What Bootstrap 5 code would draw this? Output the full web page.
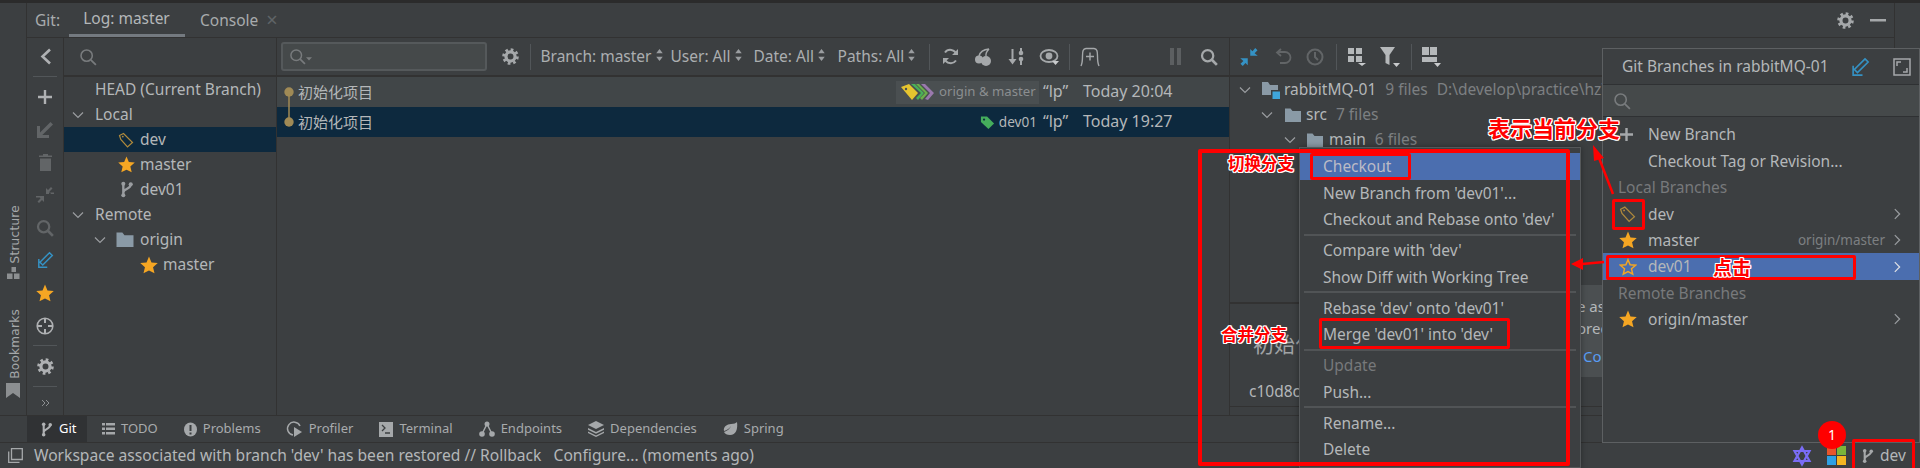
<!doctype html>
<html lang="en">
<head>
<meta charset="utf-8">
<title>Git log</title>
<link href="https://cdn.jsdelivr.net/npm/bootstrap@5.3.0/dist/css/bootstrap.min.css" rel="stylesheet">
<style>
html,body{height:468px;overflow:hidden;margin:0}
body{background:#3c3f41;color:#b4b7b9;font:15.5px/1.2 "Noto Sans","Noto Sans CJK SC",sans-serif;}
svg{display:block;flex:none;overflow:visible}
.ide{position:relative;width:1920px;height:468px;overflow:hidden}
.topstrip{height:3px;background:#2b2b2b}
.mainrow{height:412px}
.lstripe{width:27px;border-right:1px solid #323232;padding-bottom:17px}
.vlabel{writing-mode:vertical-rl;transform:rotate(180deg);font:12px "DejaVu Sans",sans-serif;letter-spacing:.3px;color:#a5a8aa;margin:0 0 4px 4px}
.vgap{height:29px}
.rstripe{width:26px;border-left:1px solid #323232}
.toolhead{height:35px;border-bottom:1px solid #323232;padding-left:8px}
.toolhead .hlabel{width:33.5px;color:#a8abad}
.logtab{width:116px;height:34px;line-height:31px;text-align:center;border-bottom:3px solid #747a80;margin-right:15.500px}
.contab{color:#a8abad}
.xclose{color:#5f6467;margin-left:8px;font-size:20px;line-height:1}
.gearend{margin-right:8px}
.ws-body{height:377px}
.actions{width:37px;border-right:1px solid #323232;padding-top:2px}
.aslot{width:36px;height:32.7px;flex:none}
.asep{width:24px;height:1px;background:#525659;margin:3px auto 4px 6px;flex:none}
.asep.tight{margin-bottom:0}
.col-tree{width:213px;border-right:1px solid #323232}
.bar{height:39px;border-bottom:2px solid #323232}
.treesearch{padding-left:15px}
.trow{height:25px;white-space:nowrap}
.trow.sel{background:#0d293e}
.p31{padding-left:31px}.p6{padding-left:6px}.p54{padding-left:54px}.p28{padding-left:28px}.p76{padding-left:76px}
.p7{padding-left:7px}.p29{padding-left:29px}.p52{padding-left:52px}
.cw25{width:25px}.cw24{width:24px}.cw26{width:26px}
.iw22{width:22px}.iw21{width:21px}.iw23{width:23px}.iw24{width:24px}
.col-log{width:953px;border-right:1px solid #323232}
.logsearch{width:206px;height:29px;margin-left:4px;background:#45494a;border:2px solid #55595b;border-radius:3px;padding:0 0 0 6px}
.tslot{width:33px}
.ms-g{margin-left:6.5px}
.pl-det{padding-left:2.5px}
.tsep{width:1px;height:26px;background:#525659;margin:0 3.5px}
.tsep2{margin:0 4px}
.flt{white-space:nowrap;color:#abaeb0}
.f1{width:130px;margin-left:6px}.f2{width:83px}.f3{width:84px}.f4{width:88px}
.updn{display:inline-block;vertical-align:1px;margin-left:4px}
.lrow{height:30px;padding-left:7px;white-space:nowrap}
.lrow.r1{background:#414648}
.lrow.r2{background:#0d293e}
.gnode{width:14px}
.msg{font-size:15px;margin-right:auto}
.chip{height:23px;background:#4a4f51;color:#8b8e90;padding:0 5px;margin-right:4px;width:143px;font-size:13.2px}
.tag2{margin-right:6px;font-size:13.6px}
.auth{width:40px;font-size:16px}
.dt{width:146px;font-size:16px}
.col-det{flex:1;min-width:0;position:relative}
.dname{white-space:nowrap}
.gr{color:#7c7f82;margin-left:9px}
.dtree{height:225px}
.ddiv{border-top:2px solid #323232}
.bigt{font-size:21px;padding:28px 0 0 23px;white-space:nowrap;color:#a0a3a5;height:78px}
.hsh{padding:0 0 0 19px;font-size:15.5px;height:24px}
.dline{border-top:1px solid #323232;height:9px}
.balloon{position:absolute;left:350px;top:247px;width:40px;height:92px;background:#4b4f51;overflow:hidden;font-size:15px;line-height:22px;padding-top:10px;white-space:nowrap}
.balloon b{display:block;font-weight:400;margin-left:-3px}
.balloon .lnk{color:#589df6;margin:6px 0 0 3px}
.tools{height:27px;border-top:1px solid #323232;font-size:13px;color:#a8abad}
.tgit{width:60px;height:27px;background:#303234;margin-left:27px;padding-left:12px;color:#fff;margin-right:15px}
.tgit span{margin-left:5px}
.titem{white-space:nowrap;margin-right:26px}
.titem span{margin-left:6px}
.status{height:26px;border-top:1px solid #323232;padding-left:8px;white-space:nowrap;font-size:15.6px}
.status span{margin-left:11px}
.sright{position:absolute;right:0;bottom:0;height:25px;width:128px}
.winlogo{margin-left:15px}
.gitmark{margin-left:14px}
.devbr{margin-left:5px}

.ctx.dropdown-menu{--bs-dropdown-bg:#3c3f41;--bs-dropdown-color:#b4b7b9;--bs-dropdown-border-color:#55585a;--bs-dropdown-border-radius:0;--bs-dropdown-padding-y:5px;--bs-dropdown-padding-x:0;--bs-dropdown-font-size:15.5px;--bs-dropdown-link-color:#b4b7b9;--bs-dropdown-divider-bg:#515456;--bs-dropdown-divider-margin-y:1.25px;--bs-dropdown-item-padding-y:0;--bs-dropdown-item-padding-x:23px;position:absolute;left:1299px;top:147px;width:282px;height:321px;min-width:0;z-index:10;margin:0;box-shadow:0 0 6px rgba(0,0,0,.35)}
.ctx .dropdown-item{height:26.5px;line-height:26.5px;padding-top:0;padding-bottom:0}
.ctx .dropdown-item.hot{background:#4b6eaf;color:#bbbbc6}
.ctx .dropdown-item.off{color:#77797b}
.ctx .dropdown-divider{margin-left:4px;margin-right:4px;border-top-width:2px;opacity:1}

.branches{position:absolute;left:1602px;top:48px;width:318px;height:395px;background:#3c3f41;border:1px solid #5d6062;z-index:10}
.bhead{height:35px;padding-left:19px}
.bsearch{height:33px;background:#45494a;border-top:1px solid #2f3133;border-bottom:1px solid #2f3133;padding-left:10px;margin-bottom:4.5px}
.bhead .ms-auto{margin-right:7px}
.bhead svg+svg{margin-left:16px}
.brow{height:26.4px;padding-left:16px;white-space:nowrap}
.brow.hot{background:#4b6eaf}
.brow .bi{width:29px}
.brow.txt{padding-left:45px}
.brow.cap{padding-left:15px;color:#77797b}
.bright{margin-left:auto;color:#7c7f82;font-size:13.5px}
.bchev{margin-left:auto;margin-right:15px}
.bright+.bchev{margin-left:5px}

.rbox{position:absolute;border:3px solid #f00;border-radius:2px;z-index:20}
.b-big{left:1198px;top:149px;width:372px;height:317px;border-width:4px}
.b-check{left:1310px;top:153px;width:101px;height:27px}
.b-merge{left:1319px;top:318px;width:191px;height:31px}
.b-tag{left:1612px;top:199px;width:33px;height:31px}
.b-dev01{left:1606px;top:255px;width:250px;height:25px}
.b-dev{left:1852px;top:439px;width:63px;height:32px}
.anno{position:absolute;z-index:21;color:#f00;font-family:"Noto Sans CJK SC",sans-serif;font-weight:700;white-space:nowrap;line-height:1;text-shadow:1px 0 #fff,-1px 0 #fff,0 1px #fff,0 -1px #fff,1px 1px #fff,-1px -1px #fff,1px -1px #fff,-1px 1px #fff}
.a1{left:1488px;top:116px;font-size:22px}
.a2{left:1228px;top:155px;font-size:16.5px}
.a3{left:1221px;top:326px;font-size:16.5px}
.a4{left:1713px;top:257px;font-size:19px}
.dot{position:absolute;left:1818px;top:421px;width:28px;height:28px;border-radius:50%;background:#f00;color:#fff;font-size:14px;text-align:center;line-height:28px;z-index:21}
.arrows{position:absolute;left:0;top:0;z-index:21}
</style>
</head>
<body>
<svg width="0" height="0" class="position-absolute">
<defs>
<symbol id="s" viewBox="0 0 16 16"><circle cx="6.8" cy="6.8" r="5" fill="none" stroke="currentColor" stroke-width="1.4"/><path d="M10.5 10.5L15 15" stroke="currentColor" stroke-width="1.6"/></symbol>
<symbol id="sb" viewBox="0 0 16 16"><circle cx="6.8" cy="6.8" r="5" fill="none" stroke="currentColor" stroke-width="2"/><path d="M10.5 10.5L15 15" stroke="currentColor" stroke-width="2.4"/></symbol>
<symbol id="cd" viewBox="0 0 16 16"><path d="M3 5.5l5 5 5-5" fill="none" stroke="currentColor" stroke-width="1.2"/></symbol>
<symbol id="cr" viewBox="0 0 16 16"><path d="M5.5 2.5l5.5 5.5-5.5 5.5" fill="none" stroke="currentColor" stroke-width="1.4"/></symbol>
<symbol id="star" viewBox="0 0 16 16"><path fill="currentColor" d="M8 .5l2.2 5.2 5.6.5-4.2 3.7 1.3 5.5L8 12.9l-4.9 2.5 1.3-5.5L.2 6.2l5.6-.5z"/></symbol>
<symbol id="staro" viewBox="0 0 16 16"><path fill="none" stroke="currentColor" stroke-width="1.3" d="M8 1.5l1.9 4.5 4.9.4-3.7 3.2 1.1 4.8L8 12.1l-4.2 2.3 1.1-4.8L1.2 6.4l4.9-.4z"/></symbol>
<symbol id="tago" viewBox="0 0 16 16"><path fill="none" stroke="currentColor" stroke-width="1.2" d="M1.5 3.5L5.5 1.5 14.5 10.5 9.5 15 2.8 7.5z"/><circle cx="4.8" cy="4.6" r=".9" fill="currentColor"/></symbol>
<symbol id="tagf" viewBox="0 0 16 16"><path fill="currentColor" d="M1 1.5h6.5l7.5 7.5-6 6L1 7.500z"/><circle cx="4.300" cy="4.800" r="1.200" fill="#0d293e"/></symbol>
<symbol id="br" viewBox="0 0 16 16"><path fill="none" stroke="currentColor" stroke-width="2.2" d="M5 2v12M12 3c0 5-7 4-7 8"/><circle cx="5" cy="2.500" r="1.900" fill="currentColor"/><circle cx="5" cy="13.500" r="1.900" fill="currentColor"/><circle cx="12" cy="3" r="1.900" fill="currentColor"/></symbol>
<symbol id="fo" viewBox="0 0 16 16"><path fill="#8a9aa6" d="M0 1.500h5.500l2 2.500H16v11H0z"/></symbol>
<symbol id="mo" viewBox="0 0 18 18"><path fill="#8a9aa6" d="M0 1h6l2 3h8v10H0z"/><path fill="#3c3f41" d="M9 9h9v9H9z"/><path fill="#3fa6dc" d="M10.500 10.500H18V18h-7.500z"/></symbol>
<symbol id="gear" viewBox="0 0 16 16"><circle cx="8" cy="8" r="4.300" fill="none" stroke="currentColor" stroke-width="3"/><circle cx="8" cy="8" r="6.500" fill="none" stroke="currentColor" stroke-width="2.600" stroke-dasharray="2.500 2.600"/></symbol>
<symbol id="tri" viewBox="0 0 8 5"><path fill="currentColor" d="M0 0h8L4 4.500z"/></symbol>
<symbol id="ud" viewBox="0 0 8 14"><path fill="currentColor" d="M4 0l3.800 5H.2zM4 14L.2 9h7.600z"/></symbol>
<symbol id="upd" viewBox="0 0 16 16"><path fill="none" stroke="currentColor" stroke-width="1.300" d="M12 1.500l2.500 2.500L6 12.500 3.500 10zM2.500 7v7.500H10"/></symbol>
<symbol id="coll" viewBox="0 0 16 16"><path fill="currentColor" d="M9 7V1.500l1.800 1.800L13 .800l1.800 1.800-2.300 2.300L15 7zM7 9v5.500l-1.800-1.800L3 15.200l-1.800-1.800 2.300-2.300L1 9z"/></symbol>
</defs>
</svg>

<div class="ide d-flex flex-column">
  <div class="topstrip"></div>
  <div class="mainrow d-flex">
    <div class="lstripe d-flex flex-column align-items-center justify-content-end">
      <div class="vlabel">Structure</div>
      <svg width="13" height="13" viewBox="0 0 13 13" fill="#8c8f91"><path d="M4.500 0h4.500v5H4.500zM0 6.500h5.500V12H0zM7 6.500h5.500V12H7z"/></svg>
      <div class="vgap"></div>
      <div class="vlabel">Bookmarks</div>
      <svg width="14" height="15" viewBox="0 0 14 15" fill="#8c8f91"><path d="M0 0h14v15l-7-5-7 5z"/></svg>
    </div>
    <div class="flex-grow-1 d-flex flex-column min-w-0">
      <div class="toolhead d-flex align-items-center">
        <div class="hlabel">Git:</div>
        <div class="logtab">Log: master</div>
        <div class="contab">Console</div><div class="xclose">×</div>
        <svg class="ms-auto" width="17" height="17" color="#a5a8aa"><use href="#gear"/></svg>
        <svg class="gearend ms-3" width="16" height="3" viewBox="0 0 16 3"><path fill="#a5a8aa" d="M0 0h16v2.500H0z"/></svg>
      </div>
      <div class="ws-body d-flex">
        <div class="actions d-flex flex-column">
          <div class="aslot d-flex align-items-center justify-content-center"><svg width="13" height="17" viewBox="0 0 13 17"><path d="M11 1.500L3.500 8.500 11 15.500" fill="none" stroke="#afb1b3" stroke-width="2.600"/></svg></div>
          <div class="asep"></div>
          <div class="aslot d-flex align-items-center justify-content-center"><svg width="14" height="14" viewBox="0 0 14 14"><path fill="#afb1b3" d="M5.800 0h2.400v5.800H14v2.400H8.200V14H5.800V8.200H0V5.800h5.800z"/></svg></div>
          <div class="aslot d-flex align-items-center justify-content-center"><svg width="16" height="16" viewBox="0 0 16 16"><path fill="#626567" d="M0 4v12h12v-3H5.300L16 2.500 13.500 0 3 10.500V4z"/></svg></div>
          <div class="aslot d-flex align-items-center justify-content-center"><svg width="13" height="17" viewBox="0 0 13 17"><path fill="#626567" d="M4 0h5v1.500h4V3H0V1.500h4zM1 4.500h11V17H1z"/></svg></div>
          <div class="aslot d-flex align-items-center justify-content-center"><svg width="18" height="18" viewBox="0 0 18 18"><path fill="#626567" d="M10 8V2l2 2 3-3 1.500 1.500-3 3L15 8zM8 10v6l-2-2-3 3-1.500-1.500 3-3L3 10zM0 10h5v1.500H0zM13 8h5V6.500h-5z"/></svg></div>
          <div class="aslot d-flex align-items-center justify-content-center"><svg width="18" height="18" color="#626567"><use href="#sb"/></svg></div>
          <div class="aslot d-flex align-items-center justify-content-center"><svg width="18" height="18" color="#3592c4"><use href="#upd"/></svg></div>
          <div class="aslot d-flex align-items-center justify-content-center"><svg width="18" height="18" color="#f5a623"><use href="#star"/></svg></div>
          <div class="aslot d-flex align-items-center justify-content-center"><svg width="18" height="18" viewBox="0 0 18 18" fill="none" stroke="#afb1b3"><circle cx="9" cy="9" r="7.800" stroke-width="1.600"/><path stroke-width="2" d="M9 1v5M9 12v5M1 9h5M12 9h5"/></svg></div>
          <div class="asep"></div>
          <div class="aslot d-flex align-items-center justify-content-center"><svg width="17" height="17" color="#afb1b3"><use href="#gear"/></svg></div>
          <div class="asep tight"></div>
          <div class="aslot d-flex align-items-center justify-content-center" ><svg width="9" height="8" viewBox="0 0 9 8" fill="none" stroke="#8c8f91"><path d="M1 1l3 3-3 3M5 1l3 3-3 3"/></svg></div>
        </div>
        <div class="col-tree">
          <div class="bar treesearch d-flex align-items-center"><svg width="18" height="18" color="#787b7d"><use href="#s"/></svg></div>
          <div class="trow d-flex align-items-center p31">HEAD (Current Branch)</div>
          <div class="trow d-flex align-items-center p6"><div class="cw25"><svg width="16" height="16" color="#9a9da0"><use href="#cd"/></svg></div>Local</div>
          <div class="trow sel d-flex align-items-center p54"><div class="iw22"><svg width="16" height="18" color="#b08a3c"><use href="#tago"/></svg></div>dev</div>
          <div class="trow d-flex align-items-center p54"><div class="iw22"><svg width="17" height="17" color="#f5a623"><use href="#star"/></svg></div>master</div>
          <div class="trow d-flex align-items-center p54"><div class="iw22"><svg width="17" height="17" color="#9a9da0"><use href="#br"/></svg></div>dev01</div>
          <div class="trow d-flex align-items-center p6"><div class="cw25"><svg width="16" height="16" color="#9a9da0"><use href="#cd"/></svg></div>Remote</div>
          <div class="trow d-flex align-items-center p28"><div class="cw24"><svg width="16" height="16" color="#9a9da0"><use href="#cd"/></svg></div><div class="iw24"><svg width="18" height="17"><use href="#fo"/></svg></div>origin</div>
          <div class="trow d-flex align-items-center p76"><div class="iw23"><svg width="18" height="18" color="#f5a623"><use href="#star"/></svg></div>master</div>
        </div>
        <div class="col-log">
          <div class="bar d-flex align-items-center">
            <div class="logsearch d-flex align-items-center"><svg width="17" height="17" color="#787b7d"><use href="#s"/></svg><svg class="mt-1" width="6" height="4" color="#787b7d"><use href="#tri"/></svg></div>
            <div class="tslot ms-g d-flex justify-content-center"><svg width="17" height="17" color="#a5a8aa"><use href="#gear"/></svg></div>
            <div class="tsep"></div>
            <div class="flt f1">Branch: master<svg class="updn" width="7" height="12" color="#9a9da0"><use href="#ud"/></svg></div>
            <div class="flt f2">User: All<svg class="updn" width="7" height="12" color="#9a9da0"><use href="#ud"/></svg></div>
            <div class="flt f3">Date: All<svg class="updn" width="7" height="12" color="#9a9da0"><use href="#ud"/></svg></div>
            <div class="flt f4">Paths: All<svg class="updn" width="7" height="12" color="#9a9da0"><use href="#ud"/></svg></div>
            <div class="tsep"></div>
            <div class="tslot d-flex justify-content-center"><svg width="17" height="17" viewBox="0 0 17 17" fill="none" stroke="#a5a8aa" stroke-width="2"><path d="M14.500 6.500A6.500 6.500 0 0 0 3 4.500M2.500 10.500A6.500 6.500 0 0 0 14 12.500"/><path fill="#a5a8aa" stroke="none" d="M16 1v6h-6zM1 16v-6h6z"/></svg></div>
            <div class="tslot d-flex justify-content-center"><svg width="17" height="18" viewBox="0 0 17 18"><circle cx="11" cy="13" r="5" fill="#a5a8aa"/><circle cx="4" cy="11.500" r="4" fill="#a5a8aa"/><path d="M4 8C5 4 8 1.500 14 1M11 8C10.500 5 12 3 14 1" fill="none" stroke="#a5a8aa" stroke-width="1.400"/></svg></div>
            <div class="tslot d-flex justify-content-center"><svg width="17" height="17" viewBox="0 0 17 17" fill="#a5a8aa"><path d="M3.500 1h2v10h3l-4 5.500-4-5.500h3z"/><path d="M12 0h2v3h-2zM12 13h2v4h-2z"/><circle cx="13" cy="5" r="2.300"/><circle cx="13" cy="11" r="2.300"/></svg></div>
            <div class="tslot d-flex justify-content-center position-relative"><svg width="20" height="16" viewBox="0 0 20 16"><ellipse cx="10" cy="7" rx="8.500" ry="6" fill="none" stroke="#a5a8aa" stroke-width="1.800"/><circle cx="10" cy="7" r="3.400" fill="#a5a8aa"/><path d="M13 12h7l-3.500 4z" fill="#c8cacc"/></svg></div>
            <div class="tsep"></div>
            <div class="tslot d-flex justify-content-center"><svg width="20" height="20" viewBox="0 0 20 20" fill="none" stroke="#a5a8aa" stroke-width="1.400"><path d="M1 19c1.500-3 1.500-6 1.500-10C2.500 4 3 2 6 1.500h8c3 .5 3.500 2.500 3.500 7.500 0 4 0 7 1.500 10M10 5.500v8M6 9.500h8"/></svg></div>
            <div class="ms-auto tslot d-flex justify-content-center"><svg width="11" height="17" viewBox="0 0 11 17" fill="#5c5f61"><path d="M0 0h4v17H0zM7 0h4v17H7z"/></svg></div>
            <div class="tslot d-flex justify-content-center me-1"><svg width="18" height="18" color="#a5a8aa"><use href="#sb"/></svg></div>
          </div>
          <div>
            <div class="lrow r1 d-flex align-items-center">
              <div class="gnode"><svg width="10" height="10" viewBox="0 0 10 10"><path d="M5 5v30" stroke="#a08a55" stroke-width="1.500"/><circle cx="5" cy="5" r="4.700" fill="#a08a55"/></svg></div>
              <div class="msg">初始化项目</div>
              <div class="chip d-flex align-items-center"><svg width="34" height="18" viewBox="0 0 34 18" class="me-1"><path fill="#e6c42f" d="M0 4l8-3 9 9-6 7z"/><circle cx="5" cy="6" r="1.200" fill="#4a4f51"/><path fill="#49b058" d="M10 1l4 0 9 9-6 7-2-2 5-5z"/><path fill="#6bb04a" d="M15 1l3 0 9 9-6 7-2-2 5-5z"/><path fill="#9a79ad" d="M20 1l4 0 9 9-6 7-3-1 5-6z"/></svg>origin &amp; master</div>
              <div class="auth">“lp”</div>
              <div class="dt">Today 20:04</div>
            </div>
            <div class="lrow r2 d-flex align-items-center">
              <div class="gnode"><svg width="10" height="10" viewBox="0 0 10 10"><circle cx="5" cy="5" r="4.700" fill="#a08a55"/></svg></div>
              <div class="msg">初始化项目</div>
              <svg class="me-1" width="15" height="17" color="#45ad5c"><use href="#tagf"/></svg>
              <div class="tag2">dev01</div>
              <div class="auth">“lp”</div>
              <div class="dt">Today 19:27</div>
            </div>
          </div>
        </div>
        <div class="col-det">
          <div class="bar d-flex align-items-center pl-det">
            <div class="tslot d-flex justify-content-center"><svg width="20" height="20" viewBox="0 0 16 16" color="#3592c4"><use href="#coll"/></svg></div>
            <div class="tslot d-flex justify-content-center"><svg width="17" height="17" viewBox="0 0 17 17" fill="none" stroke="#626567" stroke-width="1.800"><path d="M4 4h7a5 5 0 0 1 0 11H6M7 1L3 4.500 7 8"/></svg></div>
            <div class="tslot d-flex justify-content-center"><svg width="18" height="18" viewBox="0 0 18 18" fill="none" stroke="#626567" stroke-width="2"><circle cx="9" cy="9" r="7.500"/><path d="M9 4v5l3 3"/></svg></div>
            <div class="tsep tsep2"></div>
            <div class="tslot d-flex justify-content-center"><svg width="18" height="18" viewBox="0 0 18 18" fill="#b5b8ba"><path d="M0 0h6v6H0zM8 0h6v6H8zM0 8h6v6H0zM8 8h6v6H8z"/><path d="M10 15h8l-4 3z" fill="#c8cacc"/></svg></div>
            <div class="tslot d-flex justify-content-center"><svg width="20" height="20" viewBox="0 0 20 20" fill="#b5b8ba"><path d="M0 0h15L9.500 8v10l-4-2V8z"/><path d="M13 16h7l-3.500 4z" fill="#c8cacc"/></svg></div>
            <div class="tsep tsep2"></div>
            <div class="tslot d-flex justify-content-center"><svg width="20" height="20" viewBox="0 0 20 20" fill="#b5b8ba"><path d="M0 0h7v8H0zM8 0h7v8H8zM0 10h15v5H0z"/><path d="M12 16h7l-3.500 4z" fill="#c8cacc"/></svg></div>
          </div>
          <div class="dtree">
            <div class="trow d-flex align-items-center p7"><div class="cw25"><svg width="16" height="16" color="#9a9da0"><use href="#cd"/></svg></div><div class="iw22"><svg width="18" height="18"><use href="#mo"/></svg></div><span class="dname">rabbitMQ-01</span><span class="gr">9 files</span><span class="gr">D:\develop\practice\hz\rabbitMQ-01</span></div>
            <div class="trow d-flex align-items-center p29"><div class="cw26"><svg width="16" height="16" color="#9a9da0"><use href="#cd"/></svg></div><div class="iw21"><svg width="16" height="16"><use href="#fo"/></svg></div>src<span class="gr">7 files</span></div>
            <div class="trow d-flex align-items-center p52"><div class="cw24"><svg width="16" height="16" color="#9a9da0"><use href="#cd"/></svg></div><div class="iw23"><svg width="18" height="16"><use href="#fo"/></svg></div>main<span class="gr">6 files</span></div>
          </div>
          <div class="ddiv">
            <div class="bigt">初始化项目</div>
            <div class="hsh">c10d8c1</div>
            <div class="dline"></div>
          </div>
          <div class="balloon"><b>e as</b><b>ored</b><b class="lnk">Co</b></div>
        </div>
      </div>
    </div>
    <div class="rstripe"></div>
  </div>
  <div class="tools d-flex align-items-center">
    <div class="tgit d-flex align-items-center"><svg width="15" height="17" color="#afb1b3"><use href="#br"/></svg><span>Git</span></div>
    <div class="titem d-flex align-items-center"><svg width="13" height="13" viewBox="0 0 13 13" fill="#a5a8aa"><path d="M0 0h3v2.500H0zM4 0h9v2.500H4zM0 4.500h3V7H0zM4 4.500h9V7H4zM0 9h3v2.500H0zM4 9h9v2.500H4z"/></svg><span>TODO</span></div>
    <div class="titem d-flex align-items-center"><svg width="13" height="15" viewBox="0 0 13 15"><ellipse cx="6.500" cy="7.500" rx="6.500" ry="7" fill="#a5a8aa"/><path d="M5.500 3h2v6h-2zM5.500 10.500h2v2h-2z" fill="#3c3f41"/></svg><span>Problems</span></div>
    <div class="titem d-flex align-items-center"><svg width="16" height="16" viewBox="0 0 16 16" fill="none" stroke="#a5a8aa" stroke-width="1.500"><path d="M13 5A6.500 6.500 0 1 0 6 14"/><path fill="#a5a8aa" stroke="none" d="M7 6l8 5-8 5z"/></svg><span>Profiler</span></div>
    <div class="titem d-flex align-items-center"><svg width="14" height="15" viewBox="0 0 14 15"><path fill="#a5a8aa" d="M0 0h14v15H0z"/><path d="M3 3l3 3-3 3M6 11h5" fill="none" stroke="#3c3f41" stroke-width="1.300"/></svg><span>Terminal</span></div>
    <div class="titem d-flex align-items-center"><svg width="16" height="16" viewBox="0 0 16 16" fill="#a5a8aa"><circle cx="8" cy="3" r="2.500"/><circle cx="3" cy="13" r="2.800"/><circle cx="13" cy="13" r="2.800"/><path d="M8 3l-5 10M8 3l5 10" stroke="#a5a8aa" stroke-width="1.500"/></svg><span>Endpoints</span></div>
    <div class="titem d-flex align-items-center"><svg width="16" height="16" viewBox="0 0 16 16" fill="#a5a8aa"><path d="M8 0l8 4-8 4-8-4z"/><path d="M0 7l8 4 8-4v1.800l-8 4-8-4zM0 10.500l8 4 8-4v1.500l-8 4-8-4z"/></svg><span>Dependencies</span></div>
    <div class="titem d-flex align-items-center"><svg width="15" height="15" viewBox="0 0 15 15" fill="#a5a8aa"><path d="M14 0c1 7-1 13-7 13-3 0-5-1-6-3 3-1 6-3 7-6-2 3-4 4-7 5C0 5 4 2 8 2c3 0 5-1 6-2z"/></svg><span>Spring</span></div>
  </div>
  <div class="status d-flex align-items-center">
    <svg width="15" height="15" viewBox="0 0 15 15" fill="none" stroke="#a5a8aa" stroke-width="1.300"><path d="M3.500.700h10.800v10.800H3.500zM.7 3.500v10.800h10.800"/></svg>
    <span>Workspace associated with branch 'dev' has been restored // Rollback&nbsp;&nbsp; Configure... (moments ago)</span>
  </div>

  <div class="sright d-flex align-items-center">
    <svg width="20" height="20" viewBox="0 0 20 20" fill="none" stroke="#7a6cf5" stroke-width="2.200"><path d="M10 1.500L17.500 15h-15z"/><path d="M10 18.500L2.500 5h15z"/></svg>
    <svg class="winlogo" width="19" height="19" viewBox="0 0 19 19"><path fill="#e8552b" d="M0 0h9v9H0z"/><path fill="#7bb43a" d="M10 0h9v9h-9z"/><path fill="#2ea0e3" d="M0 10h9v9H0z"/><path fill="#f4b622" d="M10 10h9v9h-9z"/></svg>
    <svg class="gitmark" width="15" height="18" color="#a5a8aa"><use href="#br"/></svg>
    <span class="devbr">dev</span>
  </div>

  <div class="ctx dropdown-menu show">
    <a class="dropdown-item hot" href="#">Checkout</a>
    <a class="dropdown-item" href="#">New Branch from 'dev01'...</a>
    <a class="dropdown-item" href="#">Checkout and Rebase onto 'dev'</a>
    <hr class="dropdown-divider">
    <a class="dropdown-item" href="#">Compare with 'dev'</a>
    <a class="dropdown-item" href="#">Show Diff with Working Tree</a>
    <hr class="dropdown-divider">
    <a class="dropdown-item" href="#">Rebase 'dev' onto 'dev01'</a>
    <a class="dropdown-item" href="#">Merge 'dev01' into 'dev'</a>
    <hr class="dropdown-divider">
    <a class="dropdown-item off" href="#">Update</a>
    <a class="dropdown-item" href="#">Push...</a>
    <hr class="dropdown-divider">
    <a class="dropdown-item" href="#">Rename...</a>
    <a class="dropdown-item" href="#">Delete</a>
  </div>

  <div class="branches">
    <div class="bhead d-flex align-items-center">Git Branches in rabbitMQ-01
      <svg class="ms-auto" width="20" height="20" color="#3592c4"><use href="#upd"/></svg>
      <svg width="18" height="18" viewBox="0 0 18 18" fill="none" stroke="#a5a8aa" stroke-width="1.500" class="me-2"><path d="M1 1h16v16H1z"/><path d="M4 8V4h4M14 10v4h-4"/></svg>
    </div>
    <div class="bsearch d-flex align-items-center"><svg width="18" height="18" color="#787b7d"><use href="#s"/></svg></div>
    <div class="brow d-flex align-items-center"><div class="bi"><svg width="15" height="15" viewBox="0 0 15 15"><path fill="#a5a8aa" d="M6.300 1h2.400v5.300H14v2.400H8.700V14H6.300V8.700H1V6.300h5.300z"/></svg></div>New Branch</div>
    <div class="brow txt d-flex align-items-center">Checkout Tag or Revision...</div>
    <div class="brow cap d-flex align-items-center">Local Branches</div>
    <div class="brow d-flex align-items-center"><div class="bi"><svg width="17" height="18" color="#b08a3c"><use href="#tago"/></svg></div>dev<svg class="bchev" width="14" height="14" color="#9a9da0"><use href="#cr"/></svg></div>
    <div class="brow d-flex align-items-center"><div class="bi"><svg width="18" height="18" color="#f5a623"><use href="#star"/></svg></div>master<span class="bright">origin/master</span><svg class="bchev" width="14" height="14" color="#9a9da0"><use href="#cr"/></svg></div>
    <div class="brow hot d-flex align-items-center"><div class="bi"><svg width="18" height="18" color="#f5a623"><use href="#staro"/></svg></div>dev01<svg class="bchev" width="14" height="14" color="#dfe1e5"><use href="#cr"/></svg></div>
    <div class="brow cap d-flex align-items-center">Remote Branches</div>
    <div class="brow d-flex align-items-center"><div class="bi"><svg width="18" height="18" color="#f5a623"><use href="#star"/></svg></div>origin/master<svg class="bchev" width="14" height="14" color="#9a9da0"><use href="#cr"/></svg></div>
  </div>

  <div class="rbox b-big"></div>
  <div class="rbox b-check"></div>
  <div class="rbox b-merge"></div>
  <div class="rbox b-tag"></div>
  <div class="rbox b-dev01"></div>
  <div class="rbox b-dev"></div>
  <div class="anno a1">表示当前分支</div>
  <div class="anno a2">切换分支</div>
  <div class="anno a3">合并分支</div>
  <div class="anno a4">点击</div>
  <div class="dot">1</div>
  <svg class="arrows" width="1920" height="468" viewBox="0 0 1920 468" fill="#f00" stroke="none"><path d="M1613 194L1599 158" stroke="#f00" stroke-width="2.500"/><path d="M1593 145L1604 158 1594 161z"/><path d="M1604 262L1582 264" stroke="#f00" stroke-width="2.500"/><path d="M1571 264L1583 258 1583 270z"/></svg>
</div>
<script src="https://cdn.jsdelivr.net/npm/bootstrap@5.3.0/dist/js/bootstrap.bundle.min.js"></script>
</body>
</html>
